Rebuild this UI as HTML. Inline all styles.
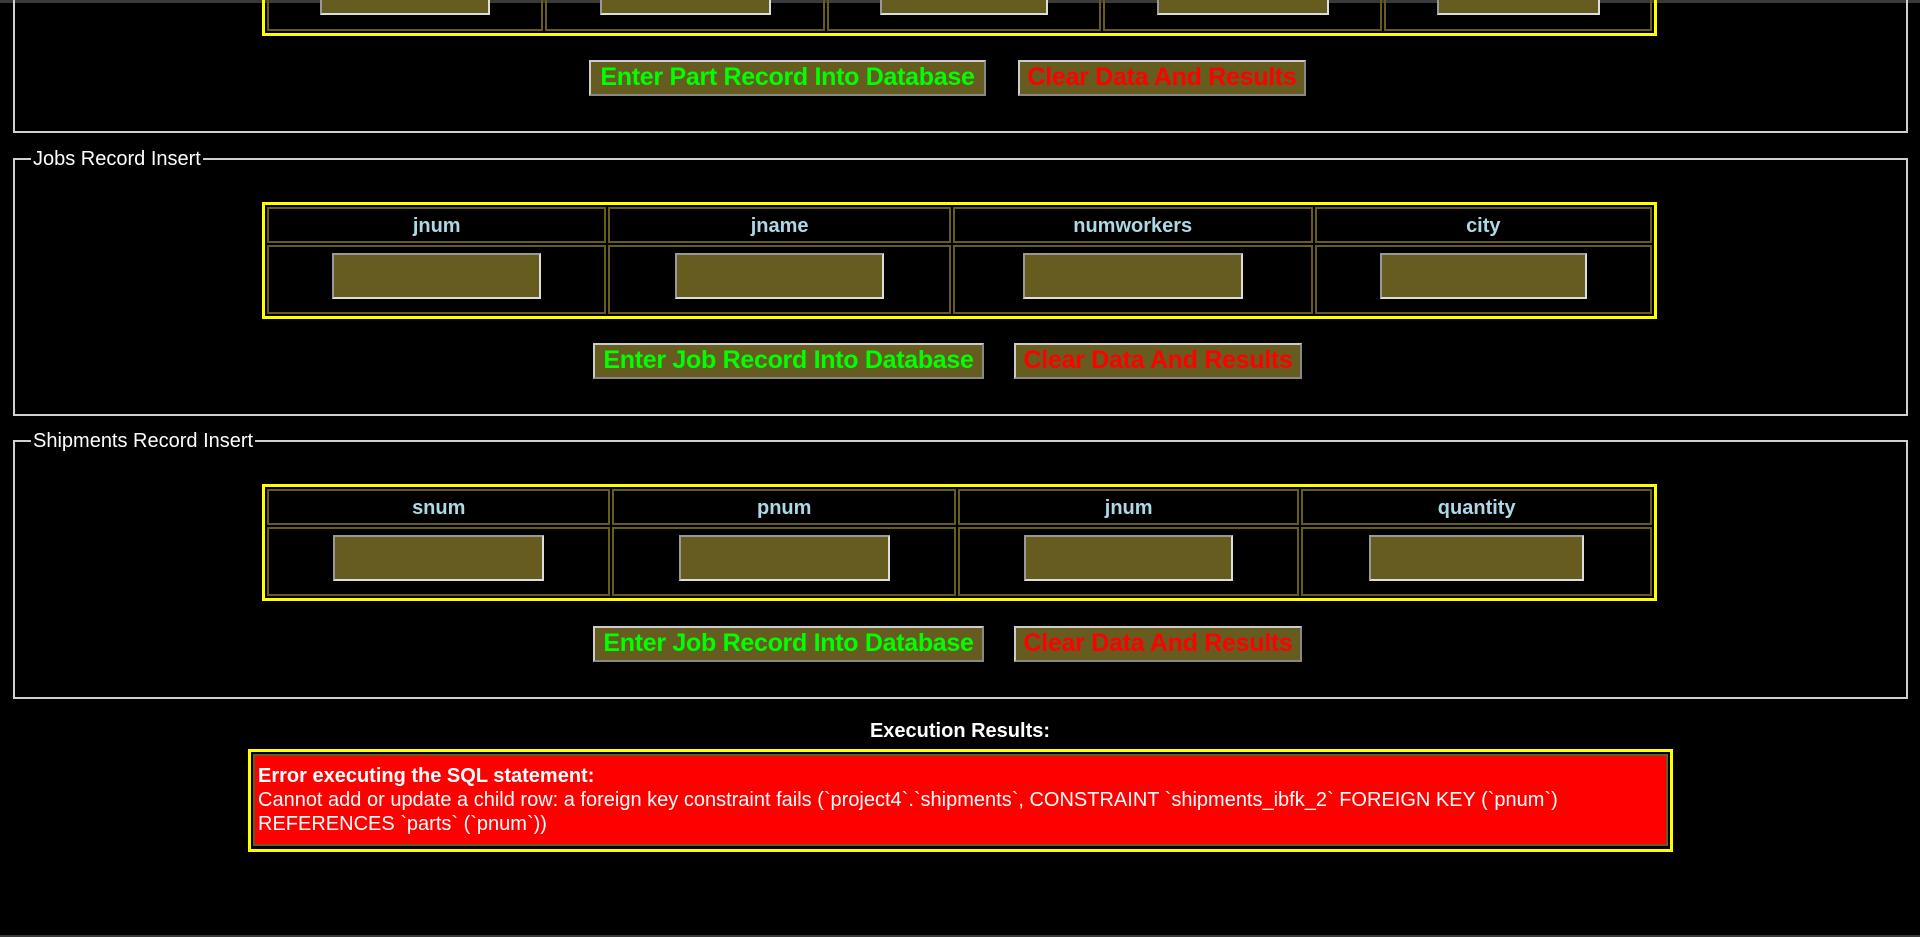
<!DOCTYPE html>
<html><head><meta charset="utf-8"><style>
html,body{margin:0;padding:0;background:#000;width:1920px;height:937px;overflow:hidden;position:relative;font-family:"Liberation Sans",sans-serif}
.topbar{position:absolute;left:0;top:0;width:1920px;height:3px;background:#3a3a3a}
.botbar{position:absolute;left:0;top:935px;width:1920px;height:2px;background:#3a3a3a}
.fs{position:absolute;left:13px;width:1895px;border:2px solid #d0d0d0;box-sizing:border-box}
.lg{position:absolute;top:-13px;left:16px;background:#000;color:#fff;font-size:20px;padding:0 2px;line-height:24px}
table.t{position:absolute;left:262px;width:1395px;border:3px solid #ff0;border-spacing:2px;box-sizing:border-box;border-collapse:separate}
table.t td{border:2px solid #665c1e;text-align:center;padding:0}
table.t td.h{color:#add8e6;font-family:"Liberation Sans",sans-serif;font-weight:bold;font-size:20px;padding-top:3px;box-sizing:border-box}
table.t td.i{vertical-align:top;padding-top:6px}
.in{display:inline-block;height:46px;background:#665c20;border:2px solid;border-color:#999 #ddd #ddd #999;box-sizing:border-box;vertical-align:top}
.btn{position:absolute;height:36px;background:#665c20;border:2px solid;border-color:#ccc #888 #888 #ccc;box-sizing:border-box;font-weight:bold;font-size:25px;line-height:31px;text-align:center;white-space:nowrap;letter-spacing:-0.3px}
.g{color:#0f0}.r{color:#f00}
</style></head><body>
<div class="topbar"></div>

<div class="fs" style="top:-20px;height:153px"></div>
<table class="t" style="top:-44px;height:77px">
<tr><td class="i" style="width:270px;height:60px"><span class="in" style="width:170px"></span></td>
<td class="i" style="width:274px"><span class="in" style="width:171px"></span></td>
<td class="i" style="width:268px"><span class="in" style="width:168px"></span></td>
<td class="i" style="width:273px"><span class="in" style="width:172px"></span></td>
<td class="i" style="width:262px"><span class="in" style="width:163px"></span></td></tr>
</table>
<div class="btn g" style="left:589px;top:60px;width:397px">Enter Part Record Into Database</div>
<div class="btn r" style="left:1018px;top:60px;width:288px">Clear Data And Results</div>

<div class="fs" style="top:158px;height:258px"><div class="lg">Jobs Record Insert</div></div>
<table class="t" style="top:202px;height:114px">
<tr><td class="h" style="width:334px;height:36px">jnum</td><td class="h" style="width:337px">jname</td><td class="h" style="width:354px">numworkers</td><td class="h" style="width:332px">city</td></tr>
<tr><td class="i" style="height:59px"><span class="in" style="width:209px"></span></td><td class="i"><span class="in" style="width:209px"></span></td><td class="i"><span class="in" style="width:220px"></span></td><td class="i"><span class="in" style="width:207px"></span></td></tr>
</table>
<div class="btn g" style="left:593px;top:343px;width:391px">Enter Job Record Into Database</div>
<div class="btn r" style="left:1014px;top:343px;width:288px">Clear Data And Results</div>

<div class="fs" style="top:440px;height:259px"><div class="lg">Shipments Record Insert</div></div>
<table class="t" style="top:484px;height:114px">
<tr><td class="h" style="width:338px;height:36px">snum</td><td class="h" style="width:338px">pnum</td><td class="h" style="width:336px">jnum</td><td class="h" style="width:345px">quantity</td></tr>
<tr><td class="i" style="height:59px"><span class="in" style="width:211px"></span></td><td class="i"><span class="in" style="width:211px"></span></td><td class="i"><span class="in" style="width:209px"></span></td><td class="i"><span class="in" style="width:215px"></span></td></tr>
</table>
<div class="btn g" style="left:593px;top:626px;width:391px">Enter Job Record Into Database</div>
<div class="btn r" style="left:1014px;top:626px;width:288px">Clear Data And Results</div>

<div style="position:absolute;top:720px;left:0;width:1920px;text-align:center;color:#fff;font-weight:bold;font-size:20px">Execution Results:</div>
<div style="position:absolute;left:248px;top:749px;width:1425px;height:103px;border:3px solid #ff0;box-sizing:border-box;padding:2px">
<div style="background:#f00;border:2px solid #665c1e;height:92px;box-sizing:border-box;color:#fff;font-size:20px;line-height:24px;padding:8px 3px 0 3px">
<b>Error executing the SQL statement:</b><br>Cannot add or update a child row: a foreign key constraint fails (`project4`.`shipments`, CONSTRAINT `shipments_ibfk_2` FOREIGN KEY (`pnum`) REFERENCES `parts` (`pnum`))
</div></div>
<div class="botbar"></div>
</body></html>
